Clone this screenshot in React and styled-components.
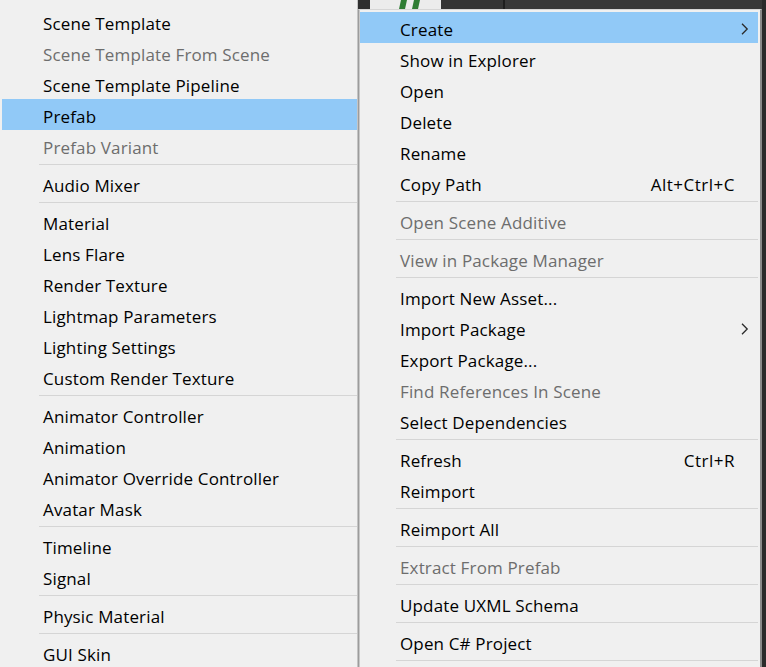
import React from 'react';
import styled, { createGlobalStyle } from 'styled-components';

const GlobalStyle = createGlobalStyle`
  html, body {
    margin: 0;
    padding: 0;
    background: #2b2b2b;
    overflow: hidden;
  }
  body {
    font-family: 'Open Sans', 'Noto Sans', sans-serif;
  }
`;

const Screen = styled.div`
  display: flex;
  width: 766px;
  height: 667px;
  overflow: hidden;
  background: #2b2b2b;
`;

const Menu = styled.div`
  flex: none;
  display: flex;
  flex-direction: column;
  background: #f0f0f0;
  box-sizing: border-box;
`;

const SubMenu = styled(Menu)`
  width: 358px;
  padding: 6px 0 0 2px;
  border-right: 1px solid #c4c4c4;
`;

const RightCol = styled.div`
  flex: none;
  display: flex;
  flex-direction: column;
  width: 404px;
`;

const TopStrip = styled.div`
  flex: none;
  display: flex;
  height: 9px;
  background: #2f2f2f;
  padding-left: 12px;
`;

const Thumb = styled.div`
  width: 71px;
  height: 9px;
  background: #ececec;
  display: flex;
  justify-content: center;
`;

const DarkPanel = styled.div`
  width: 62px;
  background: #353535;
  border-right: 2px solid #1e1e1e;
`;

const DarkRest = styled.div`
  flex: 1;
  background: #383838;
`;

const ContextMenu = styled(Menu)`
  flex: 1;
  padding: 2px 2px 0 1px;
  border-top: 1px solid #d6d6d6;
  border-left: 1px solid #9c9c9c;
  border-right: 2px solid #8a8a8a;
  box-shadow: inset 1px 0 0 #c8c8c8;
`;

const Row = styled.div`
  flex: none;
  display: flex;
  align-items: flex-start;
  height: 31px;
  box-sizing: border-box;
  padding-top: 4px;
  padding-left: ${({ $indent }) => $indent}px;
  line-height: 27px;
  font-size: 17px;
  letter-spacing: 0.15px;
  color: ${({ $disabled }) => ($disabled ? '#6d6d6d' : '#000000')};
  background: ${({ $active }) => ($active ? '#91c9f7' : 'transparent')};
  white-space: nowrap;
`;

const Label = styled.span`
  flex: 1;
`;

const Shortcut = styled.span`
  flex: none;
  letter-spacing: 0.5px;
`;

const ArrowSlot = styled.span`
  flex: none;
  width: 23px;
  height: 25px;
  display: flex;
  align-items: center;
  padding-left: 6px;
  box-sizing: border-box;
`;

const Separator = styled.div`
  flex: none;
  height: 7px;
  box-sizing: border-box;
  padding: 3px 0 3px ${({ $indent }) => $indent}px;

  &::after {
    content: '';
    display: block;
    height: 1px;
    background: #d5d5d5;
  }
`;

const Chevron = () => (
  <svg width="8" height="12" viewBox="0 0 8 12">
    <path d="M1 0.8 L6.2 6 L1 11.2" fill="none" stroke="#2a2a2a" strokeWidth="1.3" />
  </svg>
);

const createItems = [
  { label: 'Scene Template' },
  { label: 'Scene Template From Scene', disabled: true },
  { label: 'Scene Template Pipeline' },
  { label: 'Prefab', active: true },
  { label: 'Prefab Variant', disabled: true },
  '-',
  { label: 'Audio Mixer' },
  '-',
  { label: 'Material' },
  { label: 'Lens Flare' },
  { label: 'Render Texture' },
  { label: 'Lightmap Parameters' },
  { label: 'Lighting Settings' },
  { label: 'Custom Render Texture' },
  '-',
  { label: 'Animator Controller' },
  { label: 'Animation' },
  { label: 'Animator Override Controller' },
  { label: 'Avatar Mask' },
  '-',
  { label: 'Timeline' },
  { label: 'Signal' },
  '-',
  { label: 'Physic Material' },
  '-',
  { label: 'GUI Skin' },
];

const contextItems = [
  { label: 'Create', active: true, submenu: true },
  { label: 'Show in Explorer' },
  { label: 'Open' },
  { label: 'Delete' },
  { label: 'Rename' },
  { label: 'Copy Path', shortcut: 'Alt+Ctrl+C' },
  '-',
  { label: 'Open Scene Additive', disabled: true },
  '-',
  { label: 'View in Package Manager', disabled: true },
  '-',
  { label: 'Import New Asset...' },
  { label: 'Import Package', submenu: true },
  { label: 'Export Package...' },
  { label: 'Find References In Scene', disabled: true },
  { label: 'Select Dependencies' },
  '-',
  { label: 'Refresh', shortcut: 'Ctrl+R' },
  { label: 'Reimport' },
  '-',
  { label: 'Reimport All' },
  '-',
  { label: 'Extract From Prefab', disabled: true },
  '-',
  { label: 'Update UXML Schema' },
  '-',
  { label: 'Open C# Project' },
  '-',
];

function MenuItems({ items, indent, sepIndent }) {
  return items.map((item, i) =>
    item === '-' ? (
      <Separator key={i} $indent={sepIndent} />
    ) : (
      <Row key={i} $indent={indent} $active={item.active} $disabled={item.disabled}>
        <Label>{item.label}</Label>
        {item.shortcut && <Shortcut>{item.shortcut}</Shortcut>}
        <ArrowSlot>{item.submenu && <Chevron />}</ArrowSlot>
      </Row>
    )
  );
}

function Slashes() {
  return (
    <svg width="71" height="9" viewBox="0 0 71 9">
      <polygon points="29,9 35,9 37,0 31,0" fill="#2f7d34" />
      <polygon points="42,9 48,9 50,0 44,0" fill="#2f7d34" />
    </svg>
  );
}

export default function App() {
  return (
    <Screen>
      <GlobalStyle />
      <SubMenu>
        <MenuItems items={createItems} indent={41} sepIndent={37} />
      </SubMenu>
      <RightCol>
        <TopStrip>
          <Thumb>
            <Slashes />
          </Thumb>
          <DarkPanel />
          <DarkRest />
        </TopStrip>
        <ContextMenu>
          <MenuItems items={contextItems} indent={40} sepIndent={36} />
        </ContextMenu>
      </RightCol>
    </Screen>
  );
}
